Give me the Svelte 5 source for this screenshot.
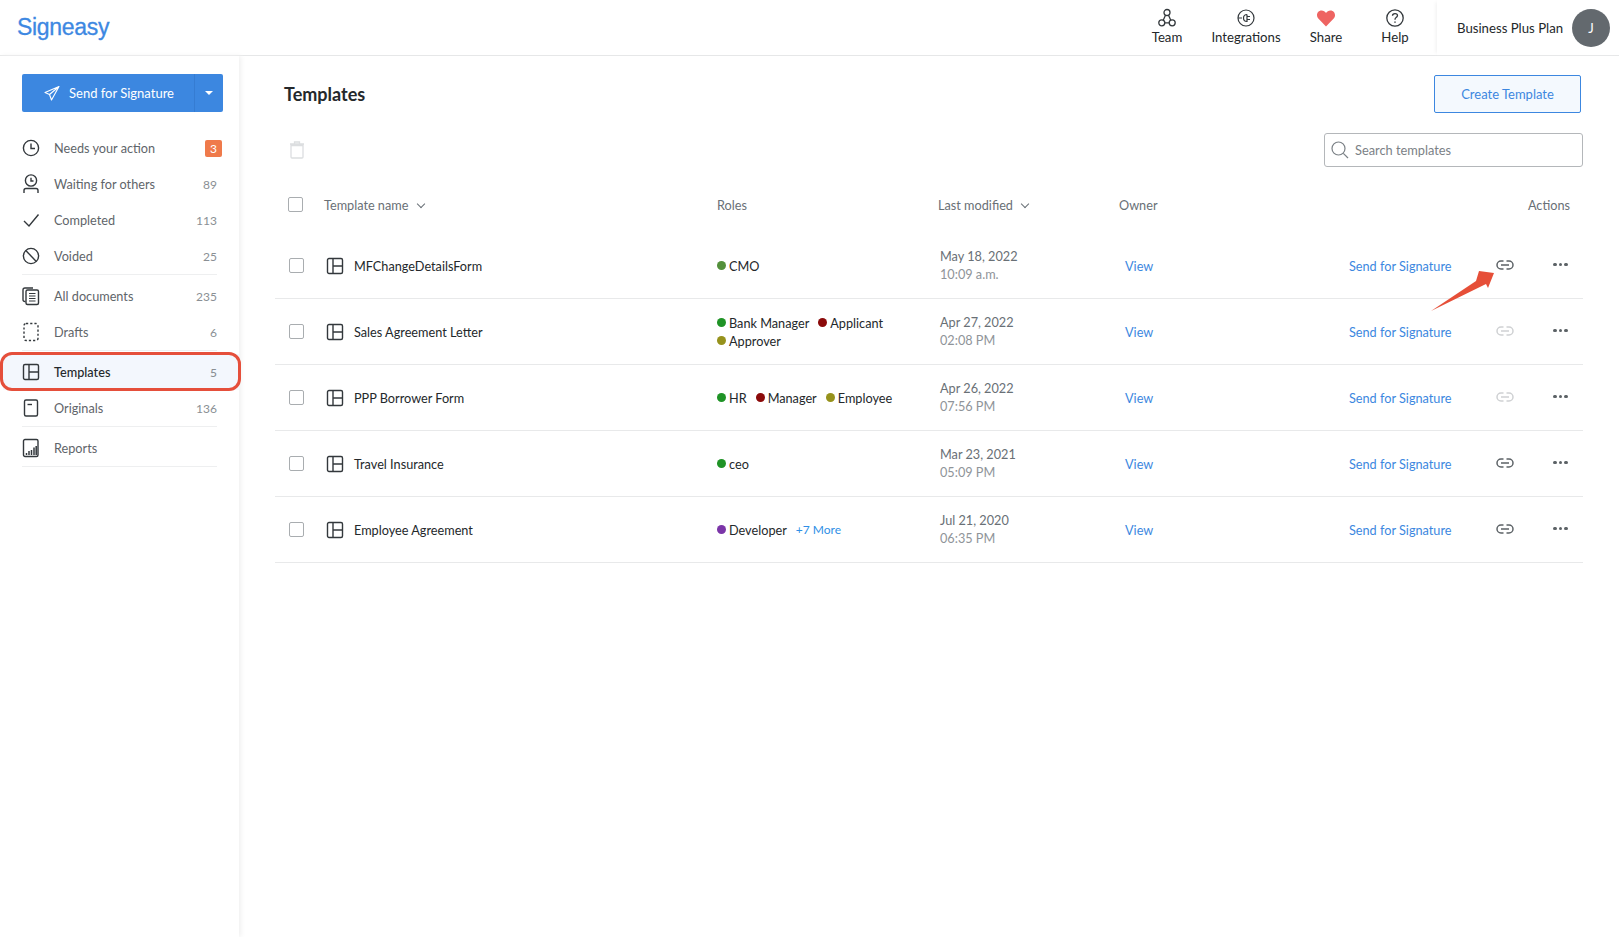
<script lang="ts">
	interface NavItem {
		label: string;
		icon: string;
		count?: number;
		alert?: boolean;
		active?: boolean;
		rule?: boolean;
	}

	interface Role {
		name: string;
		color: string;
	}

	const navItems: NavItem[] = [
		{ label: 'Needs your action', icon: 'clock', count: 3, alert: true },
		{ label: 'Waiting for others', icon: 'waiting', count: 89 },
		{ label: 'Completed', icon: 'check', count: 113 },
		{ label: 'Voided', icon: 'void', count: 25, rule: true },
		{ label: 'All documents', icon: 'docs', count: 235 },
		{ label: 'Drafts', icon: 'drafts', count: 6, rule: true },
		{ label: 'Templates', icon: 'template', count: 5, active: true },
		{ label: 'Originals', icon: 'original', count: 136, rule: true },
		{ label: 'Reports', icon: 'reports', rule: true }
	];

	const GREEN = '#1f9326';
	const RED = '#8b0a0a';
	const OLIVE = '#96921c';

	const templates = [
		{ name: 'MFChangeDetailsForm', roles: [{ name: 'CMO', color: '#53903b' }], date: 'May 18, 2022', time: '10:09 a.m.', link: true },
		{
			name: 'Sales Agreement Letter',
			roles: [
				{ name: 'Bank Manager', color: GREEN },
				{ name: 'Applicant', color: RED },
				{ name: 'Approver', color: OLIVE }
			],
			date: 'Apr 27, 2022',
			time: '02:08 PM',
			link: false
		},
		{
			name: 'PPP Borrower Form',
			roles: [
				{ name: 'HR', color: GREEN },
				{ name: 'Manager', color: RED },
				{ name: 'Employee', color: OLIVE }
			],
			date: 'Apr 26, 2022',
			time: '07:56 PM',
			link: false
		},
		{ name: 'Travel Insurance', roles: [{ name: 'ceo', color: GREEN }], date: 'Mar 23, 2021', time: '05:09 PM', link: true },
		{ name: 'Employee Agreement', roles: [{ name: 'Developer', color: '#7b35a8' }], more: '+7 More', date: 'Jul 21, 2020', time: '06:35 PM', link: true }
	];
</script>

{#snippet templateIcon()}
	<svg width="18" height="18" viewBox="0 0 18 18" fill="none" stroke="#33383c" stroke-width="1.4">
		<rect x="1.5" y="1.5" width="15" height="15" rx="1.5" />
		<path d="M7 1.5v15M7 9h9.5" />
	</svg>
{/snippet}

{#snippet navIcon(name: string)}
	<svg width="18" height="20" viewBox="0 0 18 20" fill="none" stroke="#33383c" stroke-width="1.4">
		{#if name === 'clock'}
			<circle cx="9" cy="10" r="7.6" />
			<path d="M9 5.5V10.5H13" />
		{:else if name === 'waiting'}
			<circle cx="9" cy="6.5" r="5.6" />
			<path d="M9 3.8V7H11.5" />
			<path d="M2 19v-2.5Q2 14.5 4 14.5H14Q16 14.5 16 16.5V19" />
		{:else if name === 'check'}
			<path d="M2 11l5 5L16.500 4.500" />
		{:else if name === 'void'}
			<circle cx="9" cy="10" r="7.6" />
			<path d="M3.800 4.500l10.500 11" />
		{:else if name === 'docs'}
			<path d="M3.500 15.500H3Q1 15.500 1 13.500V4Q1 2 3 2H11" />
			<rect x="4" y="4" width="12.500" height="14.500" rx="1.500" />
			<path d="M7 7.500h6.500M7 10h6.500M7 12.500h6.500M7 15h6.500" stroke-width="1.100" />
		{:else if name === 'drafts'}
			<rect x="2" y="1.500" width="14" height="17" rx="2" stroke-dasharray="2.200 2" />
		{:else if name === 'template'}
			<rect x="1.500" y="2.500" width="15" height="15" rx="1.500" />
			<path d="M7 2.500v15M7 10h9.500" />
		{:else if name === 'original'}
			<rect x="2.500" y="2" width="13" height="16" rx="1.500" />
			<path d="M5.500 6.500H10" />
		{:else if name === 'reports'}
			<rect x="1.500" y="1.500" width="14.500" height="17" rx="1.500" />
			<path d="M4.500 17v-2M7 17v-4M9.500 17v-5M12 17V9.500M14.200 17V8" stroke-width="1.500" />
		{/if}
	</svg>
{/snippet}

<div class="app">
	<header class="topbar">
		<span class="logo">Signeasy</span>
		<nav class="top-links">
			<div class="top-link team">
				<svg width="20" height="20" viewBox="0 0 20 20" fill="none" stroke="#33383c" stroke-width="1.300">
					<circle cx="10" cy="4.500" r="3" />
					<circle cx="4.800" cy="14.800" r="3" />
					<circle cx="15.200" cy="14.800" r="3" />
					<path d="M8.500 7.200l-2.300 5M11.500 7.200l2.300 5M7.800 14.800h4.400" />
				</svg>
				<span>Team</span>
			</div>
			<div class="top-link integrations">
				<svg width="20" height="20" viewBox="0 0 20 20" fill="none" stroke="#33383c" stroke-width="1.200">
					<circle cx="10" cy="10" r="8" />
					<path d="M2 10h4M11 6.500A3.500 3.500 0 0 0 11 13.500V6.500M11 8.500h3M11 11.500h3" />
				</svg>
				<span>Integrations</span>
			</div>
			<div class="top-link share">
				<svg width="20" height="20" viewBox="0 0 20 20">
					<path d="M10 18.500L2.300 10.500C-.5 7.300 1.500 2.500 5.500 2.500 7.500 2.500 9 3.500 10 5 11 3.500 12.500 2.500 14.500 2.500 18.500 2.500 20.500 7.300 17.700 10.500Z" fill="#ee6462" />
				</svg>
				<span>Share</span>
			</div>
			<div class="top-link help">
				<svg width="20" height="20" viewBox="0 0 20 20" fill="none" stroke="#33383c" stroke-width="1.300">
					<circle cx="10" cy="10" r="8.200" />
					<path d="M7.500 7.800Q7.500 5.600 10 5.600 12.500 5.600 12.500 7.600 12.500 8.900 10.900 9.700 10 10.200 10 11.800" />
					<path d="M10 13.500v1.300" stroke-width="1.500" />
				</svg>
				<span>Help</span>
			</div>
		</nav>
		<div class="plan">
			<span>Business Plus Plan</span>
			<span class="avatar">J</span>
		</div>
	</header>

	<div class="body">
		<aside class="sidebar">
			<div class="send-button">
				<span class="send-main">
					<svg width="16" height="16" viewBox="0 0 16 16" fill="none" stroke="#fff" stroke-width="1.100" stroke-linejoin="round">
						<path d="M15 1.500L1 7.500l4.500 2L7.500 15zM15 1.500L5.500 9.500" />
					</svg>
					Send for Signature
				</span>
				<span class="send-caret"></span>
			</div>
			<ul class="nav-list">
				{#each navItems as item (item.label)}
					<li class="nav-item" class:active={item.active} class:rule={item.rule}>
						{@render navIcon(item.icon)}
						<span class="nav-label">{item.label}</span>
						{#if item.alert}
							<span class="badge">{item.count}</span>
						{:else if item.count !== undefined}
							<span class="nav-count">{item.count}</span>
						{/if}
					</li>
				{/each}
			</ul>
		</aside>

		<main class="content">
			<div class="title-row">
				<h1>Templates</h1>
				<button class="create">Create Template</button>
			</div>
			<div class="tools-row">
				<svg width="16" height="18" viewBox="0 0 16 18" fill="none" stroke="#dcdee0" stroke-width="1.300">
					<path d="M2 4.500h12v11.500q0 1-1 1H3q-1 0-1-1zM1 3h14M5.500 2.800V1h5v1.800" />
				</svg>
				<div class="search">
					<svg width="20" height="20" viewBox="0 0 20 20" fill="none" stroke="#7b8186" stroke-width="1.200">
						<circle cx="8.500" cy="8.500" r="6.500" />
						<path d="M13.300 13.300L18 18" />
					</svg>
					<span>Search templates</span>
				</div>
			</div>

			<div class="table-head">
				<span class="checkbox head-check"></span>
				<span class="head-name">Template name <i class="chevron"></i></span>
				<span>Roles</span>
				<span>Last modified <i class="chevron"></i></span>
				<span>Owner</span>
				<span class="head-actions">Actions</span>
			</div>

			{#each templates as t, i (t.name)}
				<div class="row">
					<span class="checkbox"></span>
					<span class="row-icon">{@render templateIcon()}</span>
					<span class="row-name">{t.name}</span>
					<div class="roles">
						{#each t.roles as role (role.name)}
							<span class="role"><i class="dot" style="background: {role.color}"></i>{role.name}</span>
						{/each}
						{#if t.more}
							<span class="more">{t.more}</span>
						{/if}
					</div>
					<div class="modified">
						<span>{t.date}</span>
						<span class="time">{t.time}</span>
					</div>
					<span class="view">View</span>
					<span class="send-link">Send for Signature</span>
					<svg class="link-icon" class:off={!t.link} width="18" height="10" viewBox="0 0 18 10" fill="none" stroke="currentColor" stroke-width="1.500">
						<path d="M7.500 1H5a4 4 0 0 0 0 8h2.500M10.500 1H13a4 4 0 0 1 0 8h-2.500M5 5h8" />
					</svg>
					<span class="dots"><i></i><i></i><i></i></span>
					{#if i === 0}
						<svg class="arrow" width="64" height="44" viewBox="0 0 64 44">
							<path d="M0 42L45 12 48 2 63 4 57 19 55 15Z" fill="#e64f38" />
						</svg>
					{/if}
				</div>
			{/each}
		</main>
	</div>
</div>

<style>
	:global(body) {
		margin: 0;
		background: #fff;
		font-family: Lato, 'Open Sans', sans-serif;
		color: #24282b;
	}

	.app {
		min-height: 937px;
		display: flex;
		flex-direction: column;
		overflow: hidden;
	}

	.topbar {
		height: 55px;
		box-sizing: content-box;
		border-bottom: 1px solid #e6e7e8;
		display: flex;
		align-items: stretch;
		padding-left: 17px;
	}

	.logo {
		font-family: 'Liberation Sans', Arial, sans-serif;
		font-size: 23px;
		letter-spacing: -0.3px;
		color: #3d88e2;
		-webkit-text-stroke: 0.3px #3d88e2;
		line-height: 54px;
	}

	.top-links {
		margin-left: auto;
		display: flex;
		padding-right: 4px;
	}

	.top-link {
		display: flex;
		flex-direction: column;
		align-items: center;
		justify-content: flex-start;
		padding-top: 8px;
		font-size: 13.200px;
		line-height: 17px;
		gap: 1px;
		color: #24282b;
	}

	.team {
		width: 60px;
	}

	.integrations {
		width: 98px;
	}

	.share {
		width: 62px;
	}

	.help {
		width: 76px;
	}

	.plan {
		width: 182px;
		box-sizing: border-box;
		padding: 0 9px 0 20px;
		display: flex;
		align-items: center;
		justify-content: space-between;
		font-size: 13.200px;
		box-shadow: -3px 0 4px -2px #f0f0f0;
	}

	.avatar {
		width: 38px;
		height: 38px;
		border-radius: 50%;
		background: #63696e;
		color: #fff;
		font-size: 13px;
		display: flex;
		align-items: center;
		justify-content: center;
	}

	.body {
		flex: 1;
		display: flex;
	}

	.sidebar {
		width: 239px;
		flex: none;
		box-sizing: border-box;
		padding: 18px 16px 0 22px;
		box-shadow: 2px 0 5px #f0f0f0;
	}

	.send-button {
		height: 38px;
		display: flex;
		background: #3c87e0;
		border-radius: 2px;
		color: #fff;
		font-size: 13px;
	}

	.send-main {
		flex: 1;
		display: flex;
		align-items: center;
		justify-content: center;
		gap: 9px;
		padding-left: 2px;
		border-right: 1px solid #357cd2;
	}

	.send-caret {
		width: 28px;
		position: relative;
	}

	.send-caret::after {
		content: '';
		position: absolute;
		left: 10px;
		top: 17px;
		border: 4px solid transparent;
		border-top: 4px solid #fff;
		border-bottom: 0;
	}

	.nav-list {
		list-style: none;
		margin: 18px 0 0;
		padding: 0;
		width: 195px;
		display: flex;
		flex-direction: column;
	}

	.nav-item {
		position: relative;
		height: 36px;
		display: flex;
		align-items: center;
		font-size: 12.700px;
		color: #5f656a;
	}

	.nav-item.rule {
		margin-bottom: 3px;
		box-sizing: content-box;
		border-bottom: 1px solid #eeeff0;
	}

	.nav-item.active {
		color: #24282b;
		font-weight: 500;
	}

	.nav-item.active::before {
		content: '';
		position: absolute;
		inset: 0 -22px 0 -19px;
		background: #f3f7fd;
		z-index: -1;
	}

	.nav-item.active::after {
		content: '';
		position: absolute;
		left: -22px;
		right: -24px;
		top: -2px;
		bottom: -1px;
		border: 3px solid #e54f3b;
		border-radius: 12px;
	}

	.nav-label {
		margin-left: 14px;
		flex: 1;
	}

	.nav-count {
		font-size: 12px;
		color: #8a8f94;
	}

	.badge {
		width: 17px;
		height: 17px;
		margin-right: -5px;
		border-radius: 2px;
		background: #ef7a4b;
		color: #fff;
		font-size: 12px;
		text-align: center;
		line-height: 17px;
	}

	.content {
		flex: 1;
		padding: 19px 36px 0 36px;
		min-width: 0;
	}

	.title-row {
		display: flex;
		align-items: center;
		justify-content: space-between;
		padding-left: 9px;
		padding-right: 2px;
	}

	h1 {
		margin: 0;
		font-size: 18px;
		font-weight: 700;
		color: #24282b;
	}

	.create {
		width: 147px;
		height: 38px;
		border: 1px solid #3c87e0;
		border-radius: 2px;
		background: #f4f9fe;
		color: #3c87e0;
		font: 400 13px Lato, sans-serif;
	}

	.tools-row {
		display: flex;
		align-items: center;
		justify-content: space-between;
		margin-top: 20px;
		padding-left: 14px;
	}

	.search {
		width: 259px;
		height: 34px;
		box-sizing: border-box;
		border: 1px solid #b4b7ba;
		border-radius: 3px;
		display: flex;
		align-items: center;
		gap: 5px;
		padding-left: 5px;
		font-size: 12.800px;
		color: #7b8186;
	}

	.table-head {
		display: grid;
		grid-template-columns: 49px 393px 221px 181px 1fr auto;
		align-items: center;
		height: 57px;
		margin-top: 9px;
		padding: 0 13px 0 0;
		font-size: 12.700px;
		color: #697076;
	}

	.head-check {
		margin-left: 13px;
	}

	.head-actions {
		justify-self: end;
	}

	.chevron {
		display: inline-block;
		width: 5px;
		height: 5px;
		margin: 0 0 3px 6px;
		border-right: 1px solid #697076;
		border-bottom: 1px solid #697076;
		transform: rotate(45deg);
	}

	.checkbox {
		display: block;
		width: 13px;
		height: 13px;
		border: 1px solid #a9adb0;
		border-radius: 2px;
	}

	.row {
		position: relative;
		display: grid;
		grid-template-columns: 51px 28px 363px 223px 185px 224px 147px 57px 30px;
		align-items: center;
		height: 65px;
		border-bottom: 1px solid #e8e9ea;
		font-size: 12.700px;
	}

	.row .checkbox {
		margin-left: 14px;
	}

	.row-icon {
		display: flex;
	}

	.roles {
		display: flex;
		flex-wrap: wrap;
		gap: 2px 9px;
		padding-right: 30px;
		line-height: 16px;
	}

	.role {
		display: inline-flex;
		align-items: center;
		gap: 3px;
	}

	.dot {
		width: 9px;
		height: 9px;
		border-radius: 50%;
	}

	.more {
		font-size: 12px;
		color: #2f8fe6;
	}

	.modified {
		display: flex;
		flex-direction: column;
		line-height: 18px;
		color: #697076;
		margin-top: -1px;
	}

	.time {
		color: #8f9499;
	}

	.view,
	.send-link {
		color: #3c87e0;
	}

	.link-icon {
		color: #5c6266;
		margin-top: -1px;
	}

	.link-icon.off {
		color: #cfd1d3;
	}

	.dots {
		display: flex;
		gap: 2px;
		margin-top: -2px;
	}

	.dots i {
		width: 3.500px;
		height: 3.500px;
		border-radius: 50%;
		background: #5c6266;
	}

	.arrow {
		position: absolute;
		left: 1156px;
		top: 36px;
	}
</style>
